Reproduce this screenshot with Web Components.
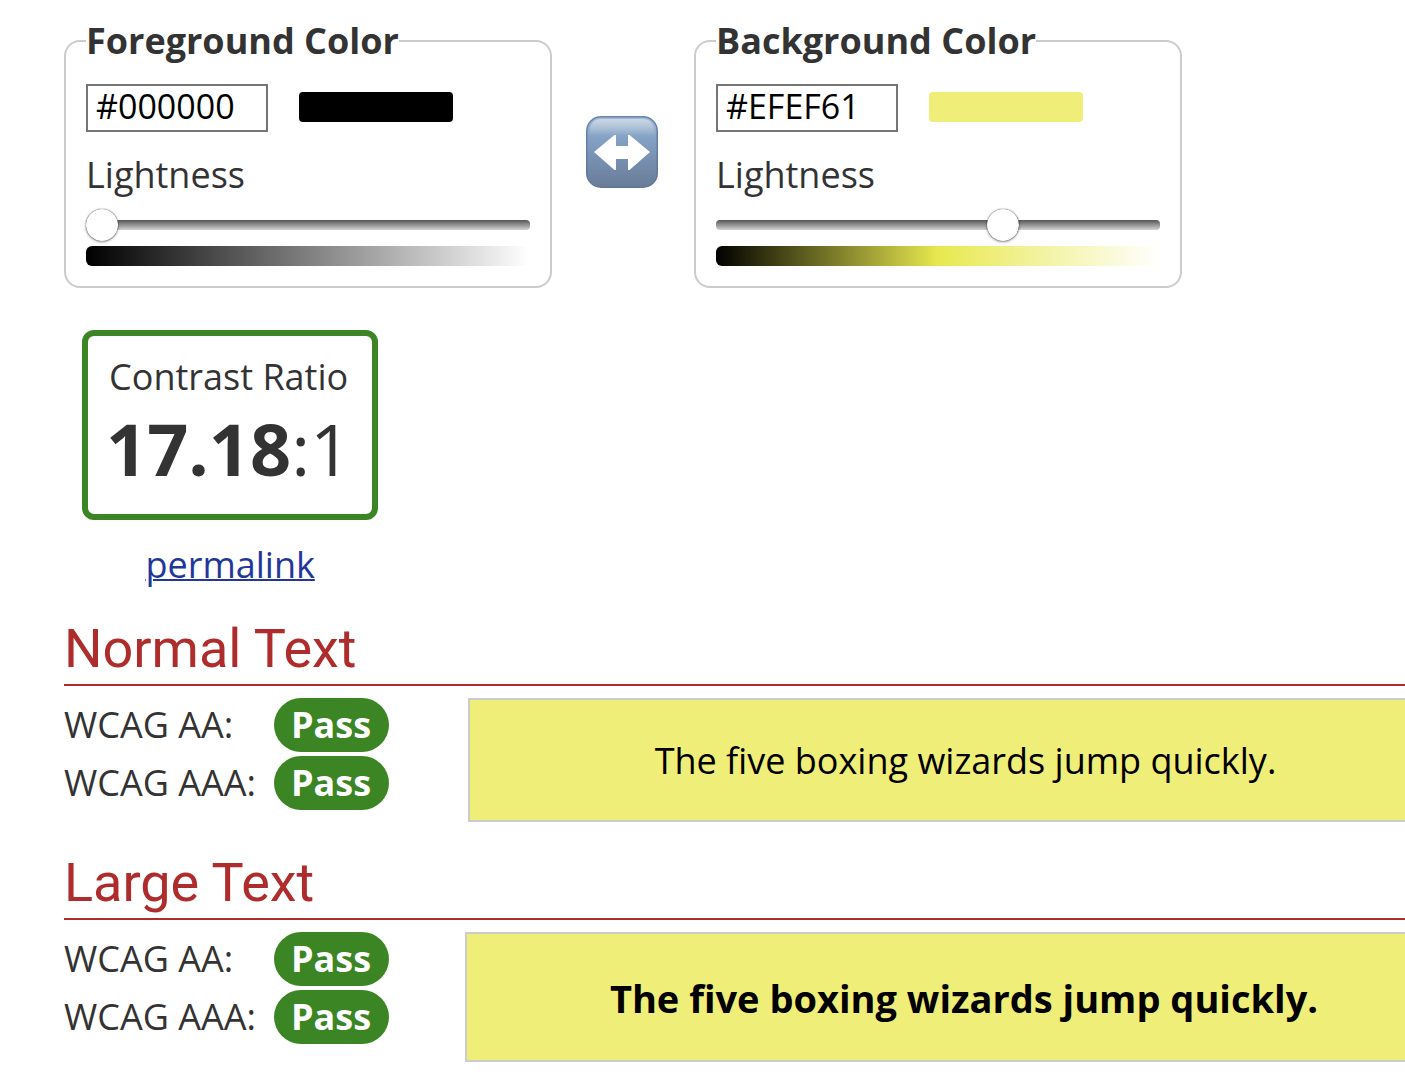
<!DOCTYPE html>
<html lang="en">
<head>
<meta charset="utf-8">
<title>Contrast Checker</title>
<style>
  body { margin: 0; background: #fff; color: #333; font: 36px/50px "Open Sans", "Noto Sans", sans-serif; }
</style>
</head>
<body>
<contrast-checker></contrast-checker>
<script>
const define = (name, markup, setup) => {
  const template = document.createElement('template');
  template.innerHTML = '<style>*{box-sizing:border-box}</style>' + markup;
  customElements.define(name, class extends HTMLElement {
    constructor() {
      super();
      this.attachShadow({ mode: 'open' }).append(template.content.cloneNode(true));
    }
    connectedCallback() { if (setup) setup(this, this.shadowRoot); }
  });
};

define('color-picker', `
  <style>
    :host { display: block; flex: 0 1 488px; }
    fieldset { margin: 0; padding: 19px 20px 20px; min-width: 0; border: 2px solid #ccc; border-radius: 16px; }
    legend { padding: 0; font-weight: 700; line-height: 49px; }
    .value { display: flex; align-items: flex-start; gap: 31px; }
    .hex { width: 182px; height: 48px; padding: 0 8px 4px; border: 2px solid #767676; border-radius: 0;
      background: #fff; color: #000; font: 34px "Open Sans", "Noto Sans", sans-serif; }
    .swatch { width: 154px; height: 30px; margin-top: 8px; border-radius: 4px; background: var(--swatch); }
    label { display: block; margin-top: 18px; line-height: 50px; }
    .lightness { display: block; width: 100%; height: 10px; margin: 20px 0 16px; border-radius: 4px;
      appearance: none; background: linear-gradient(#555, #d2d2d2); }
    .lightness::-webkit-slider-thumb { appearance: none; width: 32px; height: 32px; border-radius: 50%;
      background: #fff; box-shadow: 0 0 1px #000, 0 1px 3px rgba(0, 0, 0, .4); }
    .ramp { height: 20px; border-radius: 6px; background: var(--ramp); }
  </style>
  <fieldset>
    <legend><slot></slot></legend>
    <div class="value">
      <input class="hex" type="text">
      <div class="swatch"></div>
    </div>
    <label for="lightness">Lightness</label>
    <input class="lightness" id="lightness" type="range" min="0" max="255">
    <div class="ramp"></div>
  </fieldset>`, (host, root) => {
    const hex = root.querySelector('.hex');
    hex.value = host.getAttribute('value');
    hex.setAttribute('aria-label', host.textContent);
    root.querySelector('.lightness').value = host.getAttribute('lightness');
  });

define('swap-button', `
  <style>
    :host { display: block; }
    button { display: block; width: 74px; height: 74px; padding: 0; border: 0; background: none; }
    svg { display: block; width: 74px; height: 74px; }
  </style>
  <button type="button" aria-label="Swap colors">
    <svg viewBox="0 0 74 74" aria-hidden="true">
      <defs>
        <linearGradient id="face" x2="0" y2="1">
          <stop offset="0" stop-color="#a3bad3"/><stop offset=".18" stop-color="#94aecb"/>
          <stop offset=".3" stop-color="#83a1c5"/><stop offset=".6" stop-color="#7890b0"/>
          <stop offset="1" stop-color="#687c98"/>
        </linearGradient>
        <linearGradient id="edge" x2="0" y2="1">
          <stop offset="0" stop-color="#6484aa"/><stop offset="1" stop-color="#5f7491"/>
        </linearGradient>
        <linearGradient id="shine" x2="0" y2="1">
          <stop offset="0" stop-color="#fff" stop-opacity=".45"/><stop offset="1" stop-color="#fff" stop-opacity="0"/>
        </linearGradient>
      </defs>
      <rect x="1" y="1" width="72" height="72" rx="15" fill="url(#edge)"/>
      <rect x="2.5" y="2.5" width="69" height="69.5" rx="13.5" fill="url(#face)"/>
      <path d="M5 17Q5 4 17 4H57Q69 4 69 17V20H5Z" fill="url(#shine)"/>
      <path d="M9 37 29.5 20H31V31H43V20H44.5L65 37 44.5 55H43V44H31V55H29.5Z" fill="#fff"/>
    </svg>
  </button>`);

define('contrast-result', `
  <style>
    :host { display: flex; flex-direction: column; align-items: center; width: fit-content; }
    .box { padding: 16px 21px 20px 18px; border: 6px solid #3b8524; border-radius: 12px; text-align: center; }
    p { margin: 0; }
    .ratio { font-size: 72px; line-height: 92px; }
    a { margin-top: 20px; color: #23379b; text-decoration-thickness: 2px; }
  </style>
  <div class="box">
    <p>Contrast Ratio</p>
    <p class="ratio"><b><slot></slot></b>:1</p>
  </div>
  <a href="#permalink">permalink</a>`);

define('pass-badge', `
  <style>
    :host { display: block; padding: 0 18px 0 17px; border-radius: 27px; background: #3b8524; color: #fff;
      font-weight: 700; line-height: 54px; }
  </style>
  <slot></slot>`);

define('text-result', `
  <style>
    :host { display: block; }
    h2 { margin: 0 0 12px; border-bottom: 2px solid #af2c2c; color: #af2c2c;
      font: 400 54px/70px Roboto, sans-serif; }
    .row { display: flex; align-items: flex-start; }
    .grades { flex: none; width: var(--grades, 404px); margin: 0; display: grid; grid-template-columns: 210px max-content;
      row-gap: 4px; line-height: 54px; }
    dd { margin: 0; }
    .sample { flex: 1; margin: 0; padding: 36px 0 34px 56px; border: 2px solid #ccc; border-right: 0;
      background: #efee78; color: #000; text-align: center; white-space: nowrap; }
    :host([size="large"]) { --grades: 401px; }
    :host([size="large"]) .sample { padding-top: 39px; padding-bottom: 37px; font-size: 38px; font-weight: 700; }
  </style>
  <h2><slot></slot></h2>
  <div class="row">
    <dl class="grades">
      <dt>WCAG AA:</dt><dd><pass-badge>Pass</pass-badge></dd>
      <dt>WCAG AAA:</dt><dd><pass-badge>Pass</pass-badge></dd>
    </dl>
    <p class="sample">The five boxing wizards jump quickly.</p>
  </div>`);

define('contrast-checker', `
  <style>
    :host { display: block; padding: 16px 0 16px 64px; overflow: hidden; }
    .colors { display: flex; gap: 33px; padding-right: 32px; }
    .colors swap-button { margin: 99px 2px 0 0; }
    .fg { --swatch: #000; --ramp: linear-gradient(90deg, #000, #fff); }
    .bg { --swatch: #efee78; --ramp: linear-gradient(90deg, #000, #e8e84f, #fff); }
    contrast-result { margin: 42px 0 0 18px; }
    text-result { margin-top: 24px; }
    text-result + text-result { margin-top: 26px; }
  </style>
  <main>
    <div class="colors">
      <color-picker class="fg" value="#000000" lightness="0">Foreground Color</color-picker>
      <swap-button></swap-button>
      <color-picker class="bg" value="#EFEF61" lightness="168">Background Color</color-picker>
    </div>
    <contrast-result>17.18</contrast-result>
    <text-result>Normal Text</text-result>
    <text-result size="large">Large Text</text-result>
  </main>`);
</script>
</body>
</html>
